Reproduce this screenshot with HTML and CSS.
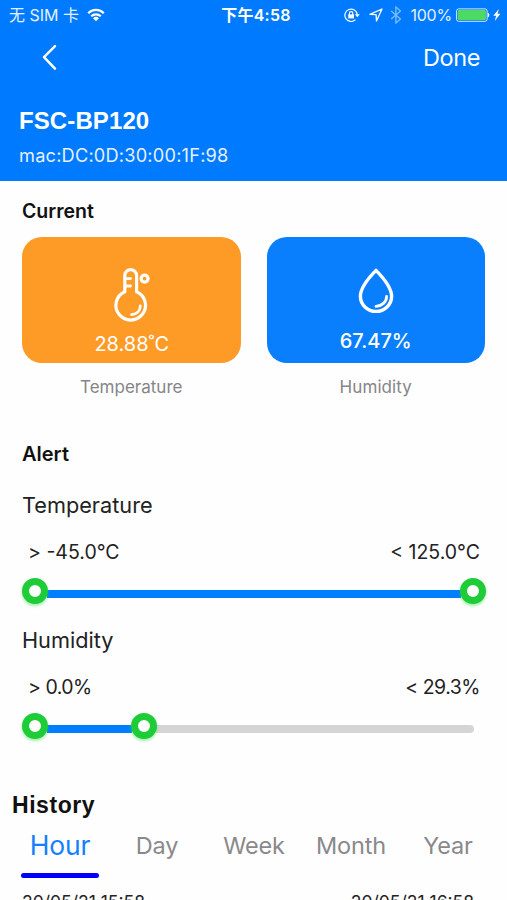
FILE: index.html
```html
<!DOCTYPE html>
<html lang="en">
<head>
<meta charset="utf-8">
<title>FSC-BP120</title>
<link rel="stylesheet" href="styles.css">
</head>
<body>
<div class="screen">
  <header class="header">
    <div class="status">
      <div class="status-left">
        <span class="carrier">无 SIM 卡</span>
        <svg class="wifi" width="18" height="14" viewBox="0 0 18 14" fill="none" stroke="#fff" stroke-width="2.2">
          <path d="M1.2 5.2a11 11 0 0 1 15.6 0M4.2 8.3a6.8 6.8 0 0 1 9.6 0"/>
          <path d="M9 13.2 6 10.3a4.3 4.3 0 0 1 6 0z" fill="#fff" stroke="none"/>
        </svg>
      </div>
      <span class="clock">下午4:58</span>
      <div class="status-right">
        <svg width="16" height="14" viewBox="0 0 16 14" fill="none" stroke="#fff">
          <path d="M11.5 11.6A6.2 6.2 0 1 1 13.2 6.5" stroke-width="1.2"/>
          <path d="M10.8 6.2h5l-2.500 3z" fill="#fff" stroke="none"/>
          <path d="M5.400 7V5.300a1.700 1.700 0 0 1 3.400 0V7" stroke-width="1.1"/>
          <path d="M4.200 6.400H10v4H4.200z" fill="#fff" stroke="none"/>
        </svg>
        <svg class="arrow" width="14" height="14" viewBox="0 0 14 14" fill="none" stroke="#fff" stroke-width="1.3" stroke-linejoin="round">
          <path d="M13 1 .9 6.300l6.200.4.4 6.200z"/>
        </svg>
        <svg class="bluetooth" width="12" height="18" viewBox="0 0 12 18" fill="none" stroke="#fff" stroke-width="1.3">
          <path d="m1.200 5 9.300 8-4.600 4V1l4.600 4-9.300 8"/>
        </svg>
        <span class="percent">100%</span>
        <svg class="battery" width="34" height="14" viewBox="0 0 34 14">
          <rect x=".6" y=".9" width="30.500" height="12.400" rx="2" fill="none" stroke="#d5e8ff"/>
          <rect x="1.800" y="2.100" width="28.100" height="10" rx="1" fill="#4cd964"/>
          <path d="M31.800 4.800c2 .6 2 4 0 4.600z" fill="#fff"/>
        </svg>
        <svg class="bolt" width="8" height="12" viewBox="0 0 8 12"><path d="M5.800 0 .3 6.800h2.800L1.800 12l5.600-7.200H4.600z" fill="#fff"/></svg>
      </div>
    </div>
    <nav class="nav">
      <svg class="back" width="18" height="28" viewBox="0 0 18 28" fill="none" stroke="#fff" stroke-width="2.500" stroke-linecap="round" stroke-linejoin="round"><path d="M14 3.200 3 14.200l11 11.400"/></svg>
      <span class="done">Done</span>
    </nav>
    <h1 class="device">FSC-BP120</h1>
    <p class="mac">mac:DC:0D:30:00:1F:98</p>
  </header>

  <section class="current">
    <h2 class="heading">Current</h2>
    <div class="cards">
      <div class="cell">
        <div class="card card-temp">
          <svg width="40" height="56" viewBox="0 0 40 56" fill="none" stroke="#fff" stroke-width="3.200" stroke-linecap="round">
            <path d="M12.800 24.700V8.600a5.900 5.900 0 0 1 11.800 0v16.100a14.800 14.800 0 1 1-11.800 0z" stroke-linejoin="round"/>
            <path d="M13.500 11.600h5M13.500 19h5" stroke-width="2.800"/>
            <path d="M28.300 38.800c0 5-3.700 8.400-8.700 8.800" stroke-width="2.800"/>
            <circle cx="32.600" cy="11.600" r="3.500" stroke-width="3.200"/>
          </svg>
          <span class="reading reading-temp">28.88˚C</span>
        </div>
        <span class="label label-temp">Temperature</span>
      </div>
      <div class="cell">
        <div class="card card-hum">
          <svg class="drop" width="40" height="48" viewBox="0 0 40 48" fill="none" stroke="#fff" stroke-width="3.400" stroke-linecap="round" stroke-linejoin="round">
            <path d="M20 3.400C15 8.500 4.400 20 4.400 29.200a15.600 15.200 0 0 0 31.200 0C35.600 20 25 8.500 20 3.400z"/>
            <path d="M30.600 29.500c0 5.500-4.800 9.500-10.600 9.900" stroke-width="2.800"/>
          </svg>
          <span class="reading reading-hum">67.47%</span>
        </div>
        <span class="label label-hum">Humidity</span>
      </div>
    </div>
  </section>

  <section class="alert">
    <h2 class="heading heading-alert">Alert</h2>
    <div class="range">
      <h3 class="range-name">Temperature</h3>
      <div class="limits"><span>&gt; -45.0°C</span><span>&lt; 125.0°C</span></div>
      <div class="slider"><div class="knob"></div><div class="track filled"></div><div class="knob"></div></div>
    </div>
    <div class="range">
      <h3 class="range-name">Humidity</h3>
      <div class="limits limits-hum"><span>&gt; 0.0%</span><span>&lt; 29.3%</span></div>
      <div class="slider partial"><div class="knob"></div><div class="track filled"></div><div class="knob"></div><div class="track rest"></div></div>
    </div>
  </section>

  <section class="history">
    <h2 class="history-title">History</h2>
    <div class="tabs">
      <span class="tab active">Hour</span><span class="tab">Day</span><span class="tab">Week</span><span class="tab">Month</span><span class="tab">Year</span>
    </div>
    <div class="dates"><span>20/05/21 15:58</span><span>20/05/21 16:58</span></div>
  </section>
</div>
</body>
</html>
```

FILE: styles.css
```css
* { box-sizing: border-box; }
body { margin: 0; background: #fefefe; color: #222; font-family: Inter, "Noto Sans CJK SC", sans-serif; }
h1, h2, h3, p { margin: 0; }
svg { display: block; flex: none; }
span { white-space: nowrap; }
.screen { width: 507px; height: 900px; overflow: hidden; }

.header { height: 181px; background: #007aff; color: #fff; }
.status { display: grid; grid-template-columns: 1fr auto 1fr; align-items: center; height: 30px; padding: 0 6px 0 9px; line-height: 30px; }
.status-left, .status-right { display: flex; align-items: center; }
.status-right { justify-content: flex-end; }
.carrier { font-size: 16px; letter-spacing: 0; color: #e5f1ff; }
.wifi { margin-left: 8px; }
.clock { padding-left: 2px; font-size: 16px; font-weight: 600; letter-spacing: 0.2px; }
.arrow { margin-left: 9px; }
.bluetooth { margin-left: 7px; opacity: 0.5; }
.percent { margin-left: 8px; font-size: 16px; letter-spacing: -0.2px; color: #e5f1ff; }
.battery { margin-left: 4px; }
.bolt { margin-left: 3px; }
.nav { display: flex; justify-content: space-between; height: 56px; padding: 0 27px 0 41px; }
.back { margin-top: 13px; }
.done { font-size: 23.5px; line-height: 56px; letter-spacing: -0.4px; }
.device { margin: 19px 0 0 19px; font: bold 24px/32px "Liberation Sans", sans-serif; letter-spacing: 0.1px; }
.mac { margin: 3px 0 0 19px; font-size: 18.2px; line-height: 30px; letter-spacing: 0.2px; color: #e5f1ff; }

.current { height: 243px; padding: 15px 22px 0; }
.heading { font-size: 19.5px; font-weight: 600; line-height: 30px; color: #111; }
.heading-alert { font-size: 20px; }
.cards { display: flex; gap: 26px; margin-top: 11px; }
.cell { flex: 1; display: flex; flex-direction: column; align-items: center; }
.card { width: 100%; height: 126px; border-radius: 20px; color: #fff; display: flex; flex-direction: column; align-items: center; padding-top: 30px; }
.card-temp { background: #fe9b27; padding-left: 1px; }
.card-hum { background: #0a7ffe; }
.reading { font-size: 20px; line-height: 28px; }
.reading-temp { margin-top: 7px; }
.reading-hum { margin-top: 12px; font-weight: 500; }
.label { margin-top: 10px; font-size: 17px; line-height: 28px; color: #858588; }
.label-hum { letter-spacing: 0.1px; }

.alert { height: 366px; padding: 15px 21px 0 22px; }
.range-name { font-size: 21.7px; font-weight: 400; line-height: 30px; }
.heading + .range { margin-top: 21px; }
.range + .range { margin-top: 21px; }
.limits { display: flex; justify-content: space-between; margin-top: 17px; padding: 0 6px; font-size: 19.5px; line-height: 30px; }
.limits-hum { letter-spacing: -0.5px; }
.slider { display: flex; align-items: center; height: 26px; margin-top: 11px; }
.knob { flex: none; width: 26px; height: 26px; border: 7px solid #1dcc37; border-radius: 50%; background: #fff; box-shadow: 0 2px 3px rgba(50, 220, 70, 0.45); }
.track { height: 8px; margin-top: 5px; }
.filled { flex: 1; background: #007eff; }
.filled { margin-left: -1px; margin-right: -1px; }
.knob { position: relative; }
.partial .filled { flex: none; width: 85px; }
.rest { flex: 1; margin-left: -1px; margin-right: 12px; background: #d5d5d5; border-radius: 0 4px 4px 0; }

.history-title { padding-left: 12px; font: bold 23px/30px "Liberation Sans", sans-serif; letter-spacing: 0.55px; color: #111; }
.tabs { display: flex; height: 68px; padding-left: 21px; }
.tab { width: 78px; margin-right: 19px; text-align: center; font-size: 23.5px; line-height: 51px; letter-spacing: -0.2px; color: #89898b; }
.tab:last-child { margin-right: 0; }
.active { height: 59px; font-size: 26.5px; color: #1580ff; }
.active::after { content: ""; display: block; height: 5px; margin-top: 2px; border-radius: 3px; background: #00f; }
.dates { display: flex; justify-content: space-between; padding: 0 33px 0 22px; font-size: 17.5px; line-height: 28px; }
```
